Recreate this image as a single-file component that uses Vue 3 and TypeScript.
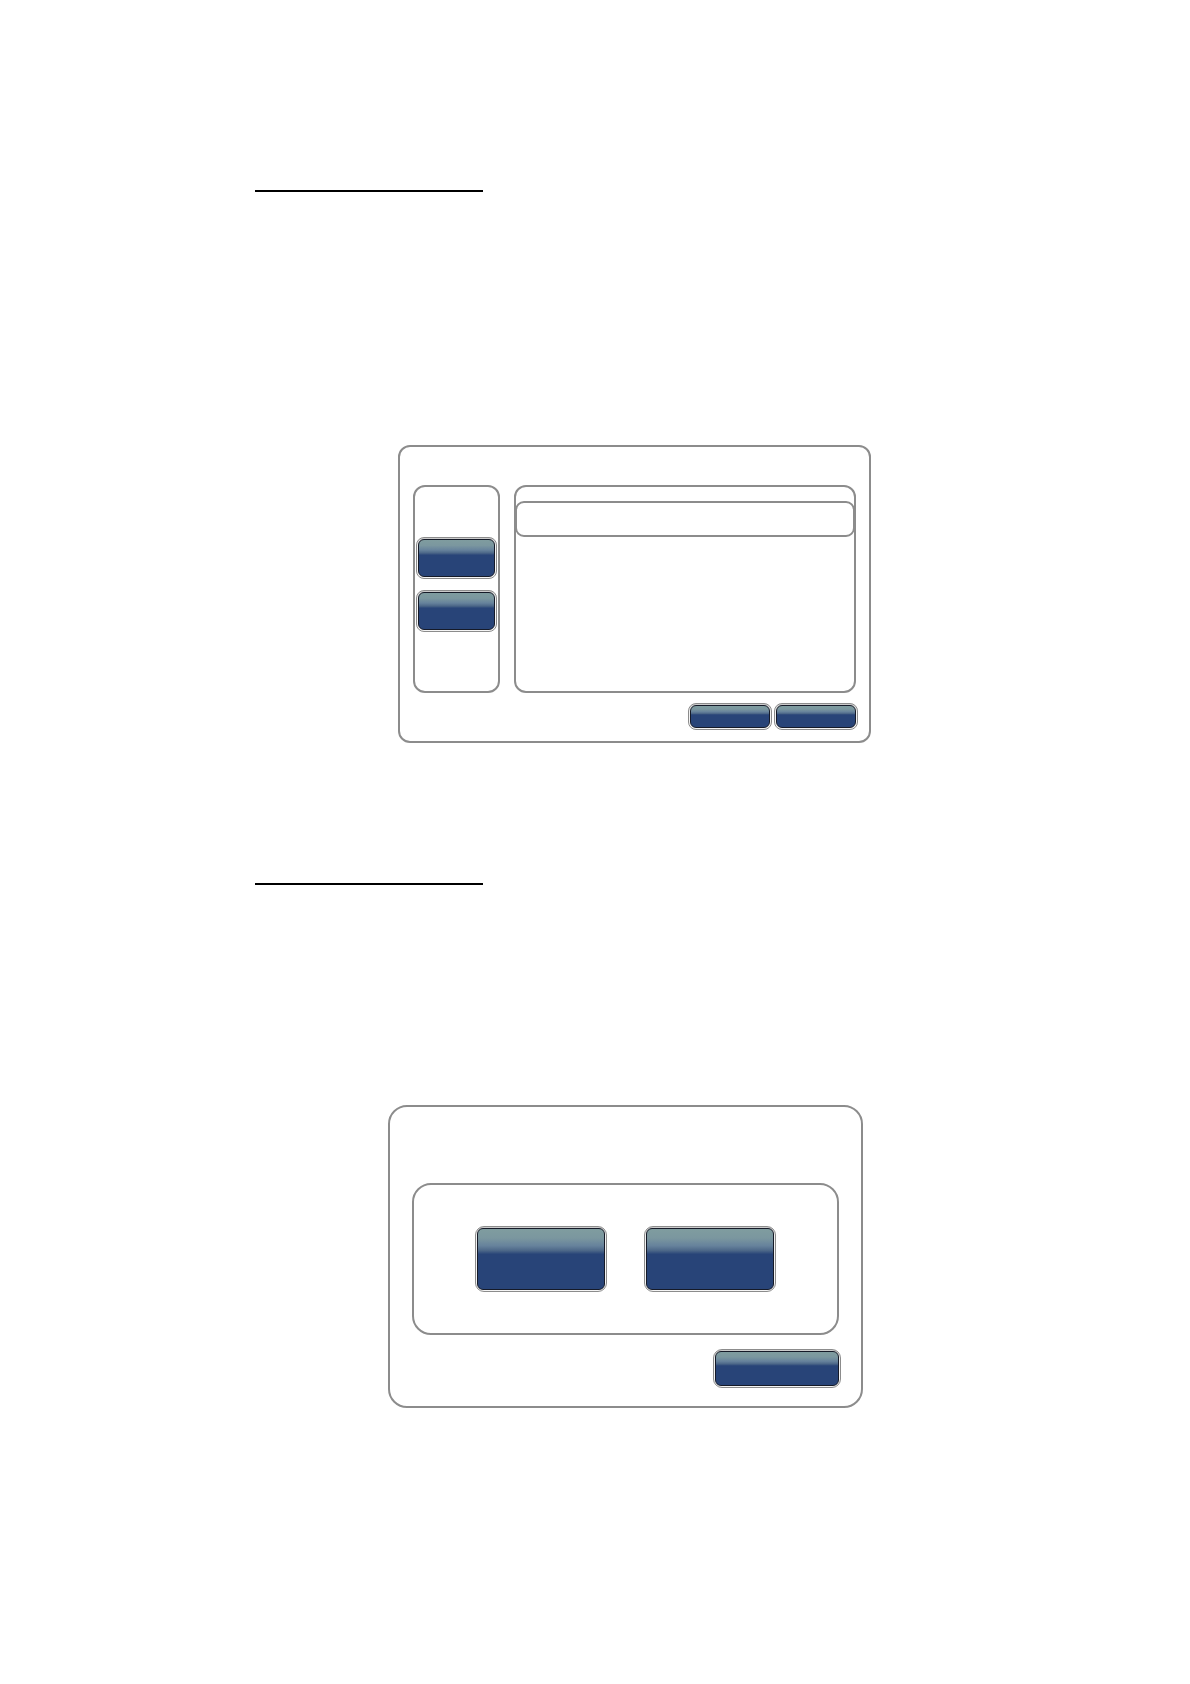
<script setup lang="ts">
const sideButtons: string[] = ['Side button 1', 'Side button 2']
const listActions: string[] = ['List action 1', 'List action 2']
const choices: string[] = ['Choice 1', 'Choice 2']
</script>

<template>
  <main class="page">
    <section class="section">
      <hr class="rule" />
      <div class="dialog list-dialog">
        <div class="columns">
          <nav class="box sidebar">
            <button v-for="name in sideButtons" :key="name" type="button" class="btn side" :aria-label="name">
              <span class="face"></span>
            </button>
          </nav>
          <div class="box list">
            <div class="box row"></div>
          </div>
        </div>
        <footer class="actions">
          <button v-for="name in listActions" :key="name" type="button" class="btn small" :aria-label="name">
            <span class="face"></span>
          </button>
        </footer>
      </div>
    </section>

    <section class="section">
      <hr class="rule" />
      <div class="dialog choice-dialog">
        <div class="box choices">
          <button v-for="name in choices" :key="name" type="button" class="btn large" :aria-label="name">
            <span class="face"></span>
          </button>
        </div>
        <footer class="actions">
          <button type="button" class="btn medium" aria-label="Close">
            <span class="face"></span>
          </button>
        </footer>
      </div>
    </section>
  </main>
</template>

<style>
body {
  background: #fff;
}
</style>

<style scoped>
.page {
  box-sizing: border-box;
  min-height: 100vh;
  padding: 190px 255px 0;
  display: flex;
  flex-direction: column;
  gap: 140px;
  background: #fff;
  font-family: "Liberation Sans", sans-serif;
}
.rule {
  width: 228px;
  height: 2px;
  margin: 0;
  border: 0;
  background: #000;
}
.dialog,
.box {
  box-sizing: border-box;
  border: 2px solid #8c8c8c;
}
.dialog {
  display: flex;
  flex-direction: column;
}
.list-dialog {
  margin: 253px 64px 0 143px;
  padding: 38px 13px 11px 13px;
  border-radius: 12px;
  gap: 10px;
}
.columns {
  display: flex;
  gap: 14px;
}
.box {
  border-radius: 12px;
}
.sidebar {
  flex: 0 0 87px;
  display: flex;
  flex-direction: column;
  gap: 11px;
  padding: 50px 1px 59px;
}
.list {
  flex: 1;
  padding-top: 14px;
}
.row {
  height: 36px;
  margin: 0 -1px;
  border-radius: 9px;
}
.actions {
  display: flex;
  justify-content: flex-end;
  gap: 2px;
  margin-right: -2px;
}
.choice-dialog {
  margin: 220px 72px 0 133px;
  padding: 76px 22px 18px;
  border-radius: 19px;
  gap: 14px;
}
.choices {
  display: flex;
  justify-content: center;
  gap: 37px;
  padding: 41px 0;
  border-radius: 19px;
}
.btn {
  box-sizing: border-box;
  display: flex;
  margin: 0;
  padding: 1px;
  border: 1px solid #8c8c8c;
  border-radius: 8px;
  background: linear-gradient(#c8c8c8 0, #f0f0f0 6px, #f4f4f4);
  cursor: pointer;
}
.face {
  flex: 1;
  align-self: stretch;
  border: 1px solid #151a28;
  border-radius: 6px;
  background: linear-gradient(#7f9c9f 0%, #7b979f 15%, #66829c 28%, #4c6788 36%, #284478 42%, #284478 100%);
}
.side {
  height: 42px;
}
.small {
  width: 84px;
  height: 27px;
}
.medium {
  width: 128px;
  height: 39px;
}
.large {
  width: 132px;
  height: 66px;
}
.medium,
.large {
  border-radius: 9px;
}
</style>
